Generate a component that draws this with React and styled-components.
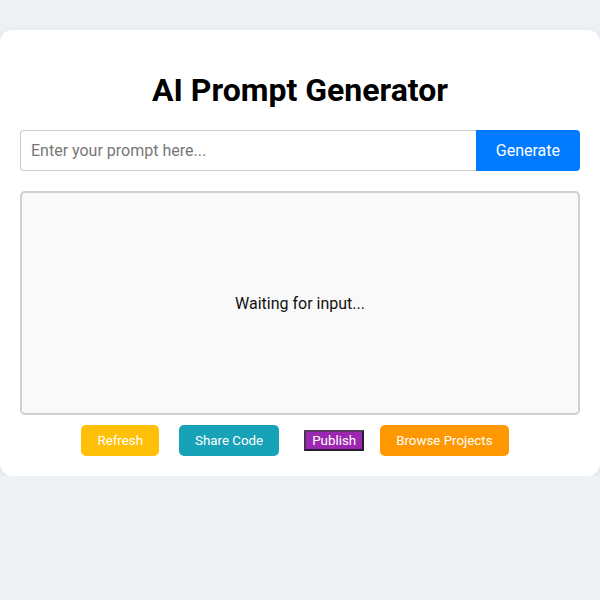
import React from "react"
import styled, { createGlobalStyle } from "styled-components"

const GlobalStyle = createGlobalStyle`
  html, body {
    margin: 0;
    padding: 0;
    background: #eef1f4;
    font-family: Roboto, "Liberation Sans", sans-serif;
  }
`

const Card = styled.div`
  max-width: 600px;
  margin: 30px auto 0;
  padding: 20px;
  box-sizing: border-box;
  background: #ffffff;
  border-radius: 12px;
  box-shadow: 0 2px 8px rgba(0, 0, 0, 0.08);
`

const Title = styled.h1`
  font-size: 32px;
  font-weight: 700;
  text-align: center;
  color: #000;
  margin: 21px 0;
`

const InputRow = styled.div`
  display: flex;
  margin-bottom: 20px;
`

const PromptInput = styled.input`
  flex: 1;
  min-width: 0;
  padding: 10px;
  font-size: 16px;
  font-family: inherit;
  border: 1px solid #cccccc;
  border-right: none;
  border-radius: 4px 0 0 4px;
  outline: none;
  color: #222;

  &::placeholder {
    color: #777;
  }
`

const GenerateButton = styled.button`
  padding: 10px 20px;
  font-size: 16px;
  font-family: inherit;
  background: #007bff;
  color: #fff;
  border: none;
  border-radius: 0 4px 4px 0;
  cursor: pointer;
`

const Output = styled.div`
  height: 200px;
  padding: 10px;
  border: 2px solid #d0d0d0;
  border-radius: 5px;
  background: #f9f9f9;
  display: flex;
  align-items: center;
  justify-content: center;
  font-size: 16px;
  color: #111;
`

const ButtonRow = styled.div`
  display: flex;
  align-items: center;
  justify-content: center;
  margin-top: 10px;
  padding-right: 10px;
`

const ActionButton = styled.button`
  padding: 8px 16px;
  font-size: 13.333px;
  font-family: inherit;
  color: #fff;
  background: ${(p) => p.$bg};
  border: none;
  border-radius: 5px;
  margin-right: ${(p) => p.$gap || 0}px;
  cursor: pointer;
`

const PublishButton = styled.button`
  padding: 1px 6px;
  font-size: 13.333px;
  font-family: inherit;
  color: #fff;
  background: #9c27b0;
  border: 2px solid #2a1a30;
  border-top-color: #5a3a60;
  border-left-color: #4a3050;
  margin-right: 16px;
  cursor: pointer;
`

export default function App() {
  return (
    <>
      <GlobalStyle />
      <Card>
        <Title>AI Prompt Generator</Title>
        <InputRow>
          <PromptInput placeholder="Enter your prompt here..." />
          <GenerateButton>Generate</GenerateButton>
        </InputRow>
        <Output>Waiting for input...</Output>
        <ButtonRow>
          <ActionButton $bg="#ffc107" $gap={20}>Refresh</ActionButton>
          <ActionButton $bg="#17a2b8" $gap={25}>Share Code</ActionButton>
          <PublishButton>Publish</PublishButton>
          <ActionButton $bg="#ff9800">Browse Projects</ActionButton>
        </ButtonRow>
      </Card>
    </>
  )
}
